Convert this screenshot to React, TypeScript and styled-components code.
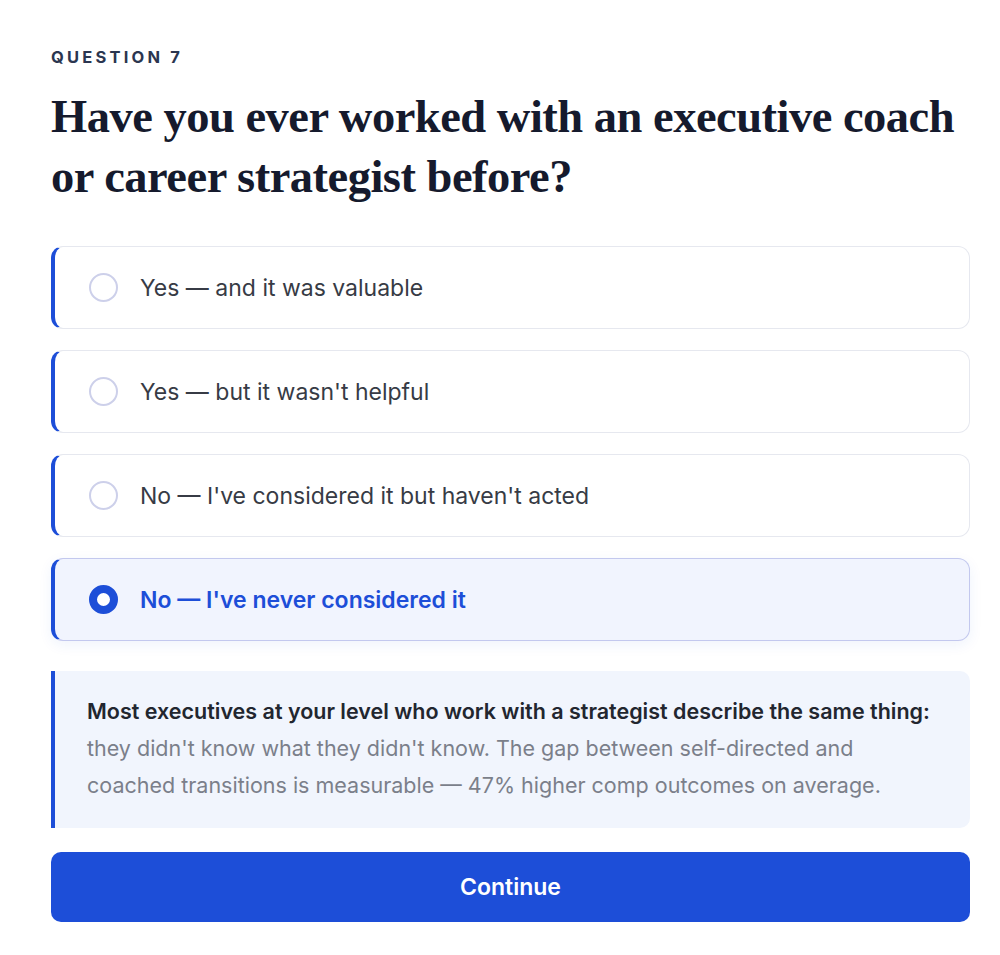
import React, { useState } from 'react'
import styled, { createGlobalStyle } from 'styled-components'

const GlobalStyle = createGlobalStyle`
  body {
    margin: 0;
    background: #ffffff;
    font-family: Inter, "Noto Sans", sans-serif;
  }
`

const Page = styled.div`
  padding: 47px 30px 30px 51px;
`

const Eyebrow = styled.div`
  font-size: 16.5px;
  line-height: 20px;
  font-weight: 700;
  letter-spacing: 3.2px;
  color: #2b3650;
  margin-bottom: 20px;
`

const Heading = styled.h1`
  font-family: "Liberation Serif", "DejaVu Serif", serif;
  font-size: 46.5px;
  line-height: 60px;
  font-weight: 700;
  letter-spacing: -0.5px;
  color: #151a2d;
  margin: 0 0 39px;
`

const Options = styled.div`
  display: flex;
  flex-direction: column;
  gap: 21px;
`

const Option = styled.button<{ selected?: boolean }>`
  display: flex;
  align-items: center;
  gap: 22px;
  height: 83px;
  padding: 0 0 0 34px;
  text-align: left;
  border: 1px solid ${({ selected }) => (selected ? '#c3c8ee' : '#e6e8ef')};
  border-left: 4px solid #1d4ed8;
  border-radius: 12px;
  background: ${({ selected }) => (selected ? '#f1f4fe' : '#ffffff')};
  box-shadow: ${({ selected }) => (selected ? '0 4px 14px rgba(29, 78, 216, 0.07)' : 'none')};
  font-family: Inter, "Noto Sans", sans-serif;
  font-size: 23px;
  font-weight: ${({ selected }) => (selected ? 600 : 400)};
  color: ${({ selected }) => (selected ? '#1d4ed8' : '#373b45')};
  cursor: pointer;
`

const Radio = styled.span<{ selected?: boolean }>`
  flex: none;
  box-sizing: border-box;
  width: 29px;
  height: 29px;
  border-radius: 50%;
  border: ${({ selected }) => (selected ? '8px solid #1d4ed8' : '2px solid #cdd0ea')};
  background: #ffffff;
`

const Callout = styled.div`
  margin-top: 30px;
  padding: 22px 24px 24px 32px;
  background: #f1f5fd;
  border-left: 4px solid #1d4ed8;
  border-radius: 0 10px 10px 0;
  font-size: 21.5px;
  line-height: 37px;
  color: #7b7f8a;
`

const Lead = styled.strong`
  display: block;
  font-weight: 600;
  color: #22262f;
`

const ContinueButton = styled.button`
  display: block;
  width: 100%;
  height: 70px;
  margin-top: 24px;
  border: none;
  border-radius: 10px;
  background: #1d4ed8;
  color: #ffffff;
  font-family: Inter, "Noto Sans", sans-serif;
  font-size: 23px;
  font-weight: 600;
  cursor: pointer;
`

const choices = [
  'Yes \u2014 and it was valuable',
  "Yes \u2014 but it wasn't helpful",
  "No \u2014 I've considered it but haven't acted",
  "No \u2014 I've never considered it",
]

export default function App() {
  const [picked, setPicked] = useState(3)
  return (
    <>
      <GlobalStyle />
      <Page>
        <Eyebrow>QUESTION 7</Eyebrow>
        <Heading>
          Have you ever worked with an executive coach
          <br />
          or career strategist before?
        </Heading>
        <Options>
          {choices.map((c, i) => (
            <Option key={c} selected={picked === i} onClick={() => setPicked(i)}>
              <Radio selected={picked === i} />
              {c}
            </Option>
          ))}
        </Options>
        <Callout>
          <Lead>Most executives at your level who work with a strategist describe the same thing:</Lead>
          they didn't know what they didn't know. The gap between self-directed and
          <br />
          coached transitions is measurable — 47% higher comp outcomes on average.
        </Callout>
        <ContinueButton>Continue</ContinueButton>
      </Page>
    </>
  )
}
